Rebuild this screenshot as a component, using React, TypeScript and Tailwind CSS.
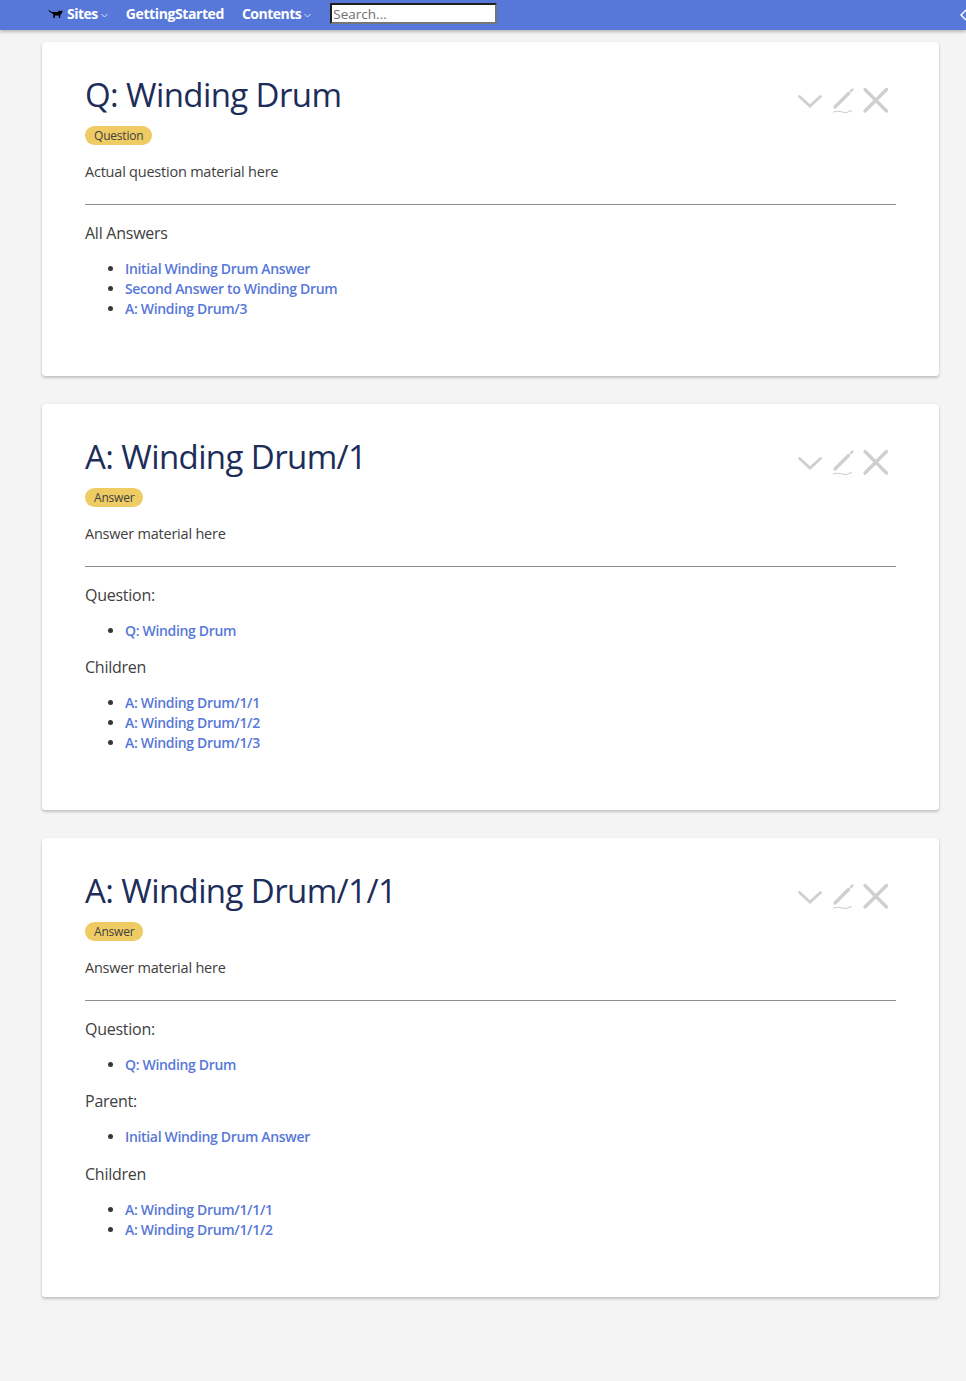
const font = { fontFamily: '"Open Sans", "Noto Sans", sans-serif' };

function Chevron({ className = "" }: { className?: string }) {
  return (
    <svg width="7" height="5" viewBox="0 0 7 5" className={className} fill="none" stroke="#dbe3f8" strokeWidth="1">
      <path d="M0.5 1l3 3 3-3" />
    </svg>
  );
}

function Cat() {
  return (
    <svg width="15" height="10" viewBox="0 0 15 10" fill="#000">
      <path d="M0 1l1.500.5 2.500 1.500 5 0 1.500-.5 .5-1.500 .8 1 1.400 0 .8-1 .5 2-.8 1.500-1.200 1-.4 3.500-1.200 0-.3-2.500-3.500 0-.5 2.500-1.300 0 0-3.500-1.500-1.500-2-1z" />
    </svg>
  );
}

function Actions() {
  return (
    <div className="absolute left-[755px] top-[45px] h-[28px] w-[95px]">
      <svg width="95" height="28" viewBox="0 0 95 28" fill="none" stroke="#cfcfcf" strokeLinecap="round">
        <path d="M2.500 9.500l10.500 9.500 10.500-9.500" strokeWidth="2.800" />
        <path d="M38 20l13.500-13.500" strokeWidth="3.400" />
        <path d="M53.800 4.200l1.700-1.700" strokeWidth="2.400" />
        <path d="M36.500 25c5-2.500 10 1 13 .5 3-.5 3-2.500 5-1.500" strokeWidth="1.100" />
        <path d="M68 2.500l21.500 21.500M89.500 2.500L68 24" strokeWidth="3.400" />
      </svg>
    </div>
  );
}

function LinkList({ items }: { items: string[] }) {
  return (
    <ul className="mt-[15px] list-disc pl-10 text-[14px] leading-[20px] marker:text-[#363636]">
      {items.map((t) => (
        <li key={t}>
          <a href="#" className="font-semibold text-[#5778d8] tracking-[-0.33px]">{t}</a>
        </li>
      ))}
    </ul>
  );
}

function Heading({ children, className }: { children: string; className: string }) {
  return <p className={`text-[16px] leading-[22px] tracking-[-0.25px] text-[#404040] ${className}`}>{children}</p>;
}

function Card({
  title, badge, body, children, height,
}: { title: string; badge: string; body: string; children: React.ReactNode; height: string }) {
  return (
    <section className={`relative ml-[42px] mr-[27px] rounded-[3px] bg-white pl-[43px] pr-[43px] pt-[29px] shadow-[0_2px_3px_rgba(10,10,10,0.2),0_0_1px_rgba(10,10,10,0.2)] ${height}`}>
      <Actions />
      <h1 className="text-[33px] leading-[48px] tracking-[-0.6px] text-[#1c2d5a]">{title}</h1>
      <div className="mt-[7px] flex">
        <span className="flex h-[19px] items-center rounded-full bg-[#efcb63] px-[9px] text-[12px] tracking-[-0.2px] text-[#404040]">{badge}</span>
      </div>
      <p className="mt-[16px] text-[14.500px] leading-[22px] tracking-[-0.22px] text-[#404040]">{body}</p>
      <hr className="mt-[21px] h-px border-0 bg-[#8f8f8f]" />
      {children}
    </section>
  );
}

export default function App() {
  return (
    <div style={font} className="relative h-[1381px] overflow-hidden bg-[#f4f4f4]">
      <nav className="relative flex h-[30px] items-center bg-[#5778d8] pb-[3px] pl-[48px] text-[14px] font-bold tracking-[-0.5px] text-white shadow-[0_2px_3px_rgba(10,10,10,0.25)]">
        <Cat />
        <span className="ml-[4px]">Sites</span>
        <Chevron className="ml-[3px] mt-[3px]" />
        <span className="ml-[18px] tracking-[-0.4px]">GettingStarted</span>
        <span className="ml-[18px]">Contents</span>
        <Chevron className="ml-[3px] mt-[3px]" />
        <input
          placeholder="Search..."
          className="ml-[19px] h-[21px] w-[167px] border-2 border-t-[#1f1f1f] border-l-[#1f1f1f] border-r-[#767676] border-b-[#767676] bg-white pl-px text-[13.500px] font-normal tracking-normal text-black placeholder:text-[#6f6f6f] outline-none"
        />
        <svg width="7" height="12" viewBox="0 0 7 12" className="absolute left-[960px] top-[9px]" fill="none" stroke="#fff" strokeWidth="1.500">
          <path d="M6 1L1 6l5 5" />
        </svg>
      </nav>

      <main className="flex flex-col gap-[28px] pt-[12px]">
        <Card title="Q: Winding Drum" badge="Question" body="Actual question material here" height="h-[334px]">
          <Heading className="mt-[17px]">All Answers</Heading>
          <LinkList items={["Initial Winding Drum Answer", "Second Answer to Winding Drum", "A: Winding Drum/3"]} />
        </Card>
        <Card title="A: Winding Drum/1" badge="Answer" body="Answer material here" height="h-[406px]">
          <Heading className="mt-[17px]">Question:</Heading>
          <LinkList items={["Q: Winding Drum"]} />
          <Heading className="mt-[15px]">Children</Heading>
          <LinkList items={["A: Winding Drum/1/1", "A: Winding Drum/1/2", "A: Winding Drum/1/3"]} />
        </Card>
        <Card title="A: Winding Drum/1/1" badge="Answer" body="Answer material here" height="h-[459px]">
          <Heading className="mt-[17px]">Question:</Heading>
          <LinkList items={["Q: Winding Drum"]} />
          <Heading className="mt-[15px]">Parent:</Heading>
          <LinkList items={["Initial Winding Drum Answer"]} />
          <Heading className="mt-[16px]">Children</Heading>
          <LinkList items={["A: Winding Drum/1/1/1", "A: Winding Drum/1/1/2"]} />
        </Card>
      </main>
    </div>
  );
}
